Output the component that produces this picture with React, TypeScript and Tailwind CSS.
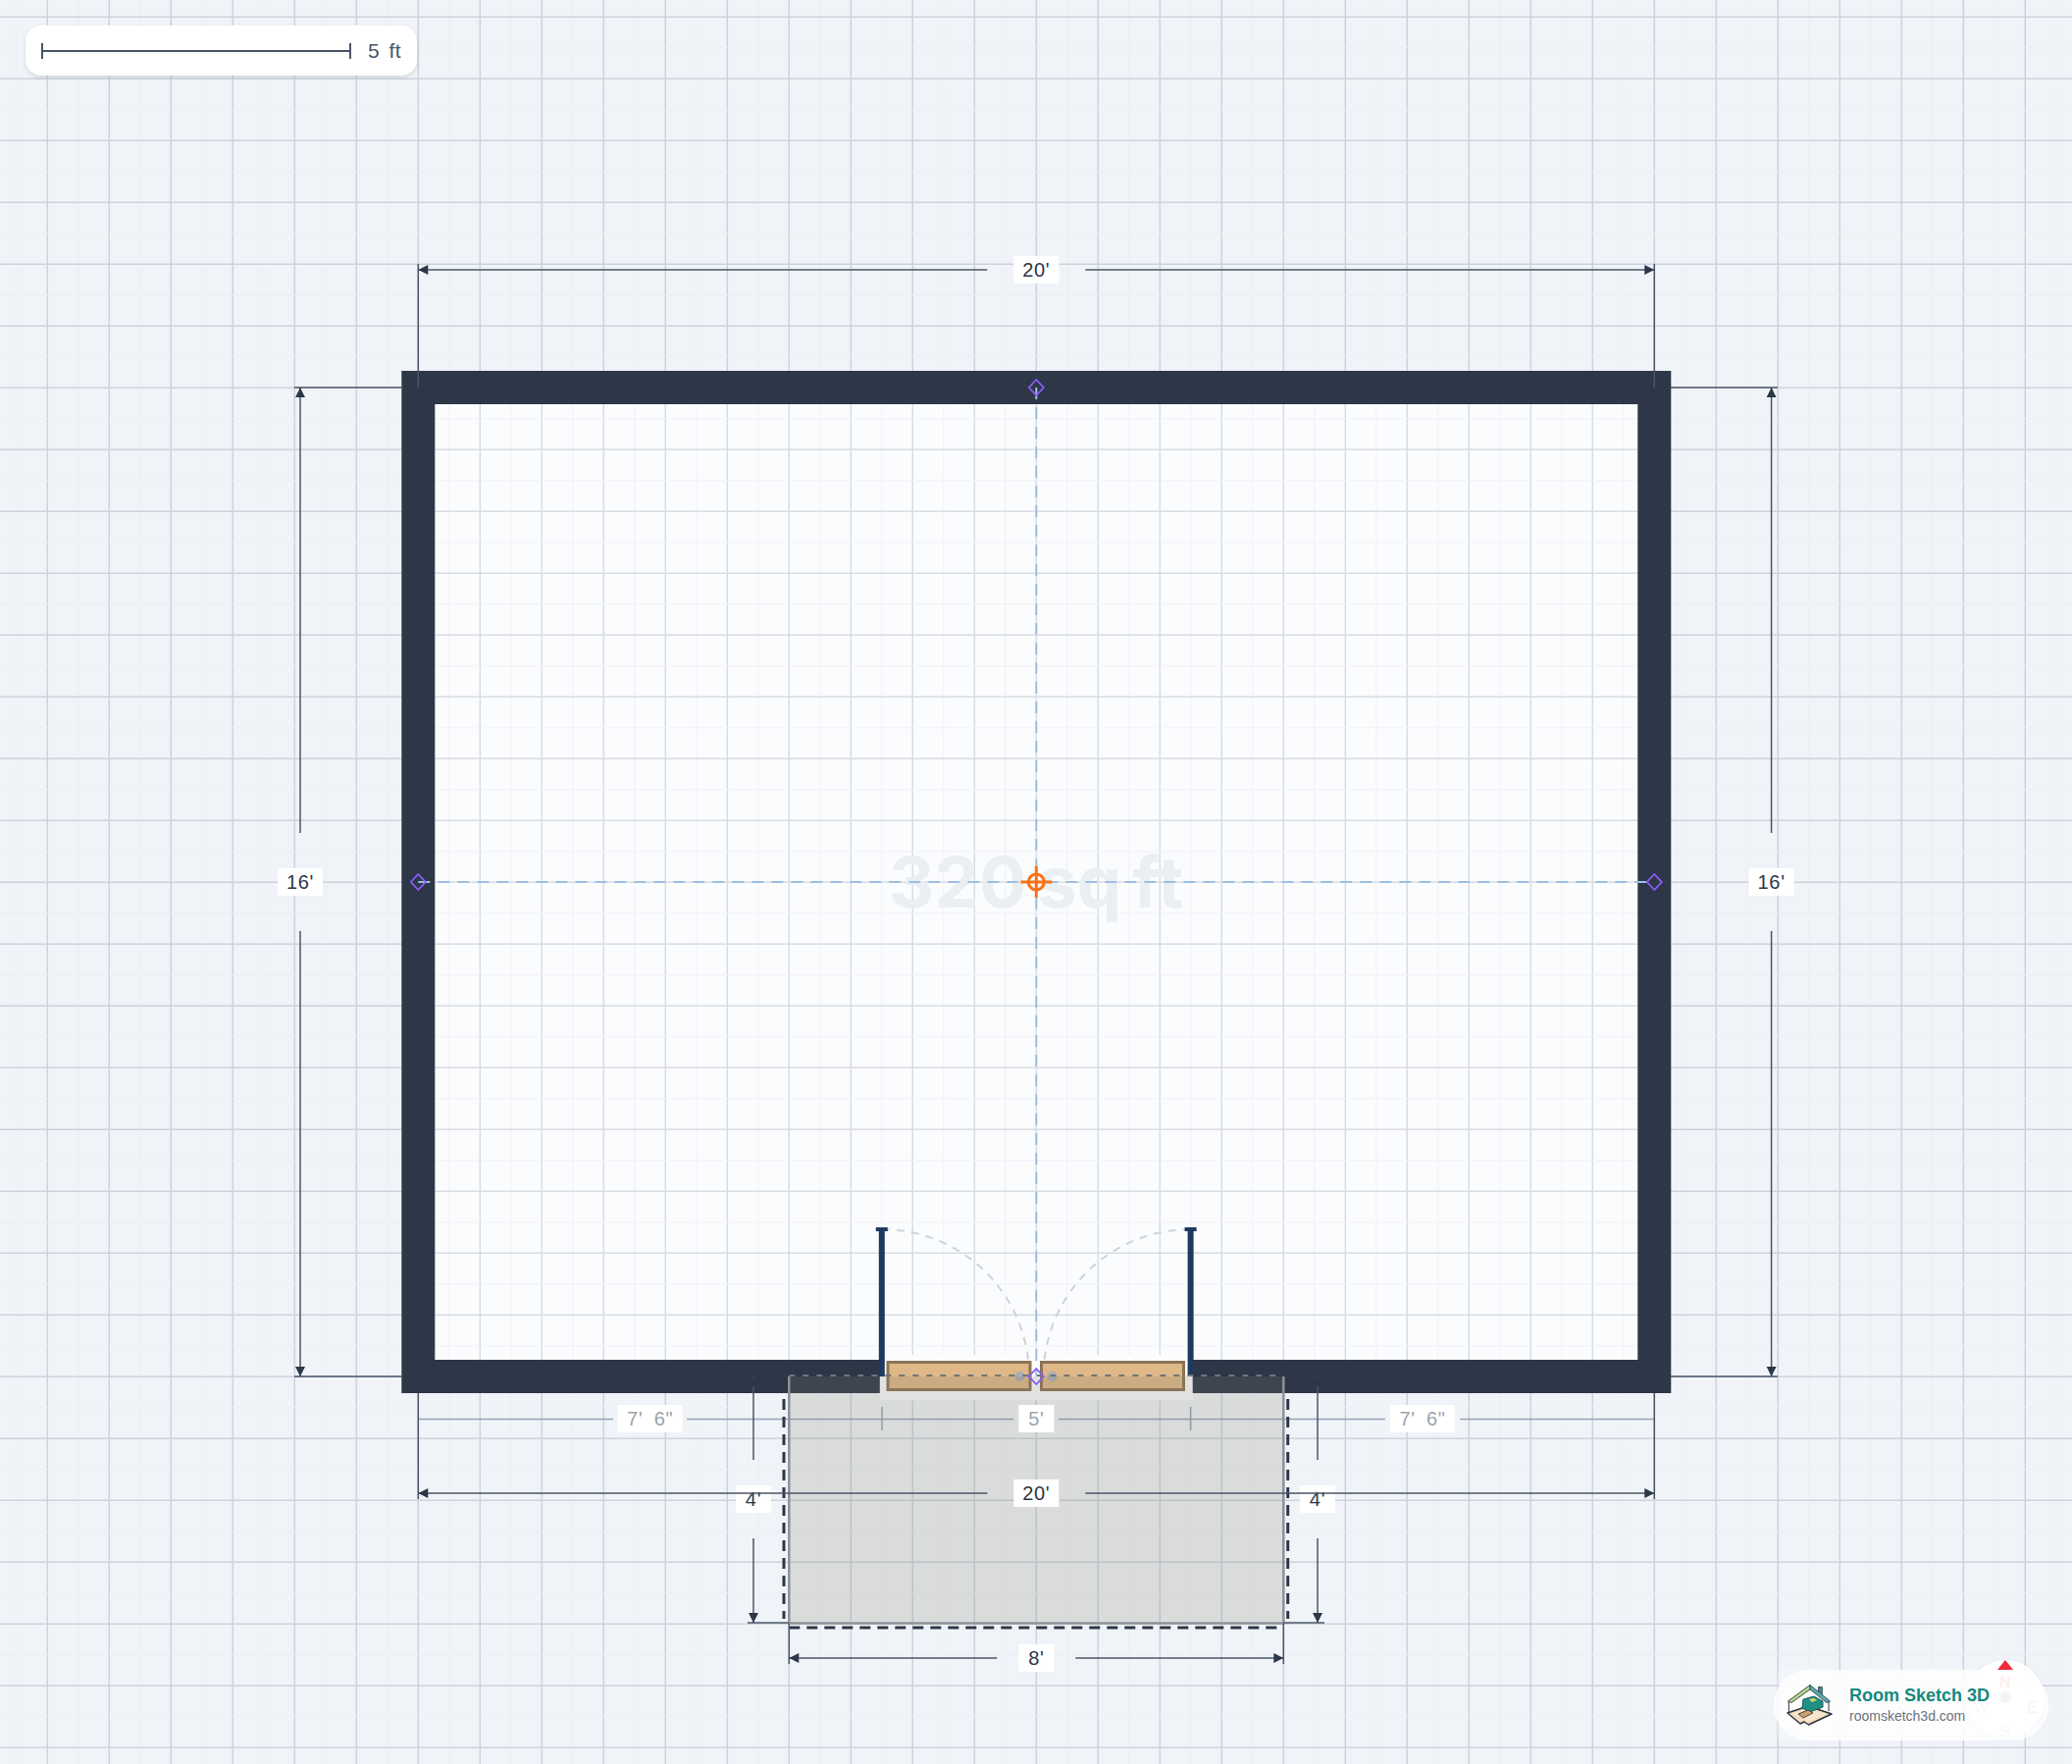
/** Floor plan sheet: one room with double doors, portico, dimensions and badges. */

const GRID_X = 48.3;
const GRID_Y = 17.3;
const STEP = 31.5;
const WALL = "#2d3748";
const LINE = "#4a5568";
const ARROW = "#2d3748";
const MUTED = "#94a3b8";

// room centre lines, 63px to the foot
const L = 426.3;
const R = 1686.3;
const T = 395;
const B = 1403;
const CX = 1056.3;
const CY = 899;

function Grid() {
  const xs = Array.from({ length: 68 }, (_, i) => i);
  const ys = Array.from({ length: 58 }, (_, i) => i);
  return (
    <g>
      {xs.map((i) => (
        <line
          key={`x${i}`}
          x1={GRID_X + (i - 1) * STEP}
          x2={GRID_X + (i - 1) * STEP}
          y1={0}
          y2={1798}
          stroke={i % 2 ? "#cdd2dd" : "#ebeff4"}
          strokeWidth={i % 2 ? 1.5 : 1}
        />
      ))}
      {ys.map((i) => (
        <line
          key={`y${i}`}
          y1={GRID_Y + (i - 1) * STEP}
          y2={GRID_Y + (i - 1) * STEP}
          x1={0}
          x2={2112}
          stroke={i % 2 ? "#cdd2dd" : "#ebeff4"}
          strokeWidth={i % 2 ? 1.5 : 1}
        />
      ))}
    </g>
  );
}

function Label({
  x,
  y,
  w,
  text,
  muted,
}: {
  x: number;
  y: number;
  w: number;
  text: string;
  muted?: boolean;
}) {
  return (
    <g>
      <rect x={x - w / 2} y={y - 14} width={w} height={28} fill="#ffffff" />
      <text
        x={x}
        y={y + 7}
        textAnchor="middle"
        className={`text-[20px] tracking-[0.7px] [word-spacing:5px] ${muted ? "fill-[#9ca3af]" : "fill-[#2d3748]"}`}
      >
        {text}
      </text>
    </g>
  );
}

function HDim({
  x1,
  x2,
  y,
  cx,
  gap,
  w,
  text,
}: {
  x1: number;
  x2: number;
  y: number;
  cx: number;
  gap: number;
  w: number;
  text: string;
}) {
  return (
    <g>
      <Label x={cx} y={y} w={w} text={text} />
      <path d={`M${x1} ${y}H${cx - gap}M${cx + gap} ${y}H${x2}`} stroke={LINE} strokeWidth={1.5} fill="none" />
      <path d={`M${x1} ${y}l10 -5v10zM${x2} ${y}l-10 -5v10z`} fill={ARROW} />
    </g>
  );
}

function VDim({
  x,
  y1,
  y2,
  cy,
  gap,
  w,
  text,
}: {
  x: number;
  y1: number;
  y2: number;
  cy: number;
  gap: number;
  w: number;
  text: string;
}) {
  return (
    <g>
      <path d={`M${x} ${y1}V${cy - gap}M${x} ${cy + gap}V${y2}`} stroke={LINE} strokeWidth={1.5} fill="none" />
      <path d={`M${x} ${y1}l-5 10h10zM${x} ${y2}l-5 -10h10z`} fill={ARROW} />
      <Label x={x} y={cy} w={w} text={text} />
    </g>
  );
}

function Anchor({ x, y }: { x: number; y: number }) {
  return (
    <path
      d={`M${x} ${y - 8}L${x + 7.5} ${y}L${x} ${y + 8}L${x - 7.5} ${y}Z`}
      fill="none"
      stroke="#8b5cf6"
      strokeWidth={1.8}
    />
  );
}

function Doors() {
  return (
    <g>
      <rect x={896.8} y={1381} width={318.9} height={46} fill="#fcfcfd" />
      <path
        d={`M899 1253A150 150 0 0 1 1049 ${B}M1213.6 1253A150 150 0 0 0 1063.6 ${B}`}
        fill="none"
        stroke="#cfd3d8"
        strokeWidth={2}
        strokeDasharray="8 7"
      />
      <rect x={905} y={1388.5} width={145} height={28} fill="#deb887" stroke="#8b7355" strokeWidth={3} />
      <rect x={1061.5} y={1388.5} width={145} height={28} fill="#deb887" stroke="#8b7355" strokeWidth={3} />
      <rect x={895.8} y={1253} width={6} height={150} fill="#1e3a5f" />
      <rect x={892.8} y={1251} width={12} height={4} fill="#1e3a5f" />
      <rect x={1210.6} y={1253} width={6} height={150} fill="#1e3a5f" />
      <rect x={1207.6} y={1251} width={12} height={4} fill="#1e3a5f" />
      <circle cx={1039.6} cy={B} r={5} fill="#a8aeb3" />
      <circle cx={1072.6} cy={B} r={5} fill="#a8aeb3" />
    </g>
  );
}

function Plan() {
  return (
    <svg
      width={2112}
      height={1798}
      viewBox="0 0 2112 1798"
      className="block font-['Liberation_Sans',sans-serif]"
    >
      <rect x={L} y={T} width={R - L} height={B - T} fill="#fafbfd" />
      <Grid />
      <rect x={L} y={T} width={R - L} height={B - T} fill="#ffffff" fillOpacity={0.22} />
      <text
        x={CX}
        y={925}
        textAnchor="middle"
        className="fill-[#ebeef2] font-['Inter',sans-serif] text-[72px] font-bold [word-spacing:-6px]"
      >
        320 sq ft
      </text>

      <rect x={L} y={T} width={R - L} height={B - T} fill="none" stroke={WALL} strokeWidth={34} />
      <Doors />

      {/* grey opening dimensions */}
      <path
        d={`M${L} 1446.5H625M700 1446.5H899M899 1446.5H1033M1079 1446.5H1214M1214 1446.5H1412M1488 1446.5H${R}M899 1434V1458M1213.6 1434V1458`}
        stroke={MUTED}
        strokeWidth={1.5}
        fill="none"
      />

      {/* portico */}
      <rect x={804.3} y={B} width={504} height={251.5} fill="#827d70" fillOpacity={0.2} />
      <path d={`M804.3 ${B}V1654.5H1308.3V${B}`} fill="none" stroke="#8f9398" strokeWidth={2.5} />
      <path d={`M804.3 1402H1308.3`} stroke="#70747a" strokeWidth={2} strokeDasharray="6 8" />
      <path
        d={`M799 ${B + 5}V1650M804.3 1659H1304M1312.7 ${B + 5}V1650`}
        stroke={WALL}
        strokeWidth={3}
        strokeDasharray="11 7"
        fill="none"
      />

      <Label x={662.7} y={1446} w={66} text={`7' 6"`} muted />
      <Label x={CX} y={1446} w={36} text="5'" muted />
      <Label x={1450} y={1446} w={66} text={`7' 6"`} muted />

      {/* centre guides */}
      <path
        d={`M${CX} ${T}V${B}M${L} ${CY}H${R}`}
        stroke="#9dbfe3"
        strokeWidth={2}
        strokeDasharray="12 8"
        fill="none"
      />
      <Anchor x={CX} y={T} />
      <Anchor x={L} y={CY} />
      <Anchor x={R} y={CY} />
      <Anchor x={CX} y={B} />
      <circle cx={CX} cy={CY} r={8} fill="none" stroke="#f97316" strokeWidth={3} />
      <path d={`M${CX - 16} ${CY}H${CX + 16}M${CX} ${CY - 16}V${CY + 16}`} stroke="#f97316" strokeWidth={3} />

      {/* extension lines */}
      <path
        d={`M${L} 269V${T}M${R} 269V${T}M300 ${T}H409M300 ${B}H409M1703 ${T}H1812M1703 ${B}H1812M${L} 1420V1528M${R} 1420V1528M762 1654H804M1308 1654H1350M804.3 1655V1696M1308.3 1655V1696`}
        stroke={LINE}
        strokeWidth={1.5}
        fill="none"
      />

      <VDim x={768} y1={B} y2={1654} cy={1528} gap={40} w={36} text="4'" />
      <VDim x={1343} y1={B} y2={1654} cy={1528} gap={40} w={36} text="4'" />
      <HDim x1={L} x2={R} y={275} cx={CX} gap={50} w={46} text="20'" />
      <HDim x1={L} x2={R} y={1522} cx={CX} gap={50} w={46} text="20'" />
      <HDim x1={804.3} x2={1308.3} y={1690} cx={CX} gap={40} w={36} text="8'" />
      <VDim x={306} y1={T} y2={B} cy={CY} gap={50} w={46} text="16'" />
      <VDim x={1805.6} y1={T} y2={B} cy={CY} gap={50} w={46} text="16'" />
    </svg>
  );
}

function ScaleBar() {
  return (
    <div className="absolute left-[26px] top-[26px] flex h-[51px] items-center gap-[17px] rounded-2xl bg-white px-4 shadow-[0_2px_4px_rgba(0,0,0,0.12)]">
      <svg width={316} height={18} viewBox="0 0 316 18" className="block">
        <path d="M1 1V17M315 1V17" stroke={LINE} strokeWidth={2} />
        <path d="M1 9H315" stroke={LINE} strokeWidth={2} />
      </svg>
      <span className="font-['Liberation_Sans',sans-serif] text-[21px] tracking-[0.5px] text-[#4a5568] [word-spacing:3px]">
        5 ft
      </span>
    </div>
  );
}

function Compass() {
  return (
    <div className="absolute left-[2004px] top-[1692px] h-[80px] w-[80px] rounded-full bg-white/90 font-['Liberation_Sans',sans-serif] text-[16px] text-[#c4c8ce] shadow-[0_1px_3px_rgba(0,0,0,0.15)]">
      <div className="absolute left-[32px] top-[0px] h-0 w-0 border-x-[8px] border-b-[10px] border-x-transparent border-b-[#ef2b3c]" />
      <span className="absolute left-[34px] top-[11px] font-semibold text-[#ef8f8f]">N</span>
      <span className="absolute left-[35px] top-[62px]">S</span>
      <span className="absolute left-[8px] top-[37px]">W</span>
      <span className="absolute left-[62px] top-[37px]">E</span>
      <div className="absolute left-[34px] top-[32px] h-3 w-3 rounded-full bg-[#b4b8be]" />
    </div>
  );
}

function HouseLogo() {
  return (
    <svg width={48} height={42} viewBox="0 0 48 42" className="block shrink-0">
      <path d="M1 29L22 22L46 30L22.5 41L18 38L14 40Z" fill="#f1dcbb" stroke="#2b3440" strokeWidth={1.4} strokeLinejoin="round" />
      <path d="M5 30L22 24L40 30L22 38Z" fill="#f6e7cf" />
      <path d="M2.4 17V28M43 17V27" stroke="#4b5563" strokeWidth={1.2} />
      <path d="M32.5 2.5H36.3V11L32.5 8Z" fill="#3f8f96" stroke="#2b3440" strokeWidth={0.8} />
      <path d="M1.5 17L24 0.5V5L5 18.5Z" fill="#b5d88b" stroke="#3f4a44" strokeWidth={1} strokeLinejoin="round" />
      <path d="M24 0.5L44.5 17L41 18.5L24 5Z" fill="#62a5ad" stroke="#2f5a60" strokeWidth={1} strokeLinejoin="round" />
      <path d="M17 15L28 12L37 17V23L24 28L16 24Z" fill="#1f8f85" stroke="#17524e" strokeWidth={0.9} />
      <path d="M23 15L28 14L31 16L26 18Z" fill="#d9d36b" />
      <path d="M12 30L22 26L27 29L17 34Z" fill="#c9a06f" stroke="#4b3a2a" strokeWidth={0.9} />
    </svg>
  );
}

function BrandBadge() {
  return (
    <div className="absolute left-[1808px] top-[1702px] h-[72px] w-[280px] rounded-full bg-white/80">
      <div className="ml-[4px] flex h-full w-[250px] items-center gap-4 rounded-l-md bg-white/30 pl-[9px]">
        <HouseLogo />
        <div className="flex flex-col font-['Liberation_Sans',sans-serif]">
          <span className="text-[18px] font-bold leading-[22px] text-[#15897e]">Room Sketch 3D</span>
          <span className="text-[14px] leading-[20px] text-[#6b7280]">roomsketch3d.com</span>
        </div>
      </div>
    </div>
  );
}

export default function App() {
  return (
    <div className="relative h-[1798px] w-[2112px] overflow-hidden bg-[#f0f4f8]">
      <Plan />
      <ScaleBar />
      <Compass />
      <BrandBadge />
    </div>
  );
}
